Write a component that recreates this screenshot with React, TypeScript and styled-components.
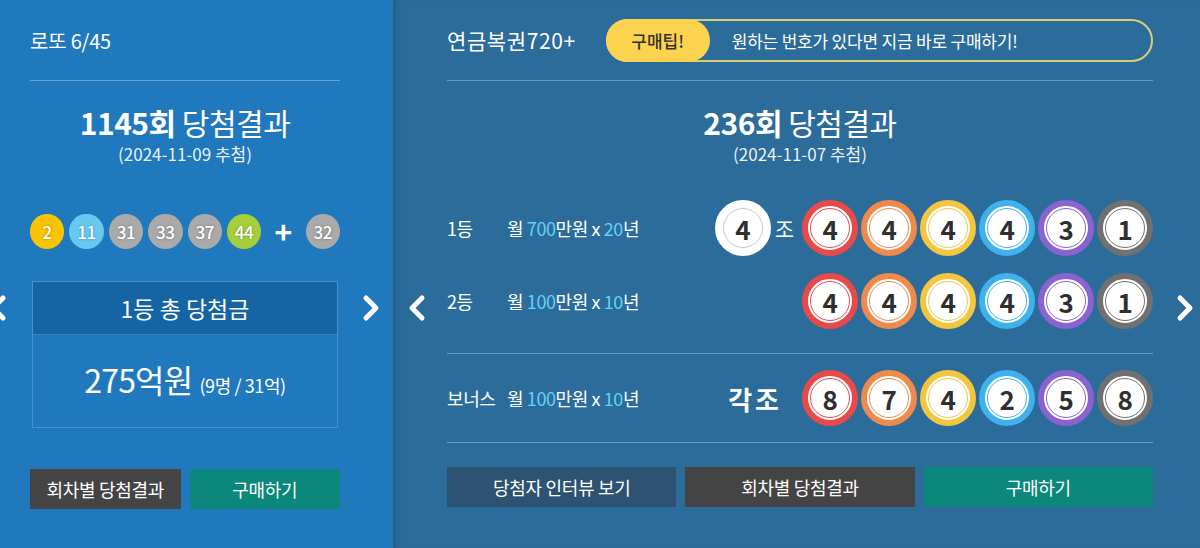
import React from 'react'
import styled, { createGlobalStyle } from 'styled-components'

const GlobalStyle = createGlobalStyle`
  html, body {
    margin: 0;
    padding: 0;
    background: #2c6c9b;
  }
  body {
    font-family: "Noto Sans CJK KR", "Noto Sans", sans-serif;
    color: #fff;
  }
  * { box-sizing: border-box; }
`

const lottoColor = (n: number) => {
  if (n <= 10) return '#fbc400'
  if (n <= 20) return '#69c8f2'
  if (n <= 30) return '#ff7272'
  if (n <= 40) return '#aaaaaa'
  return '#a6cf3c'
}

const ringColors = ['#e84a4a', '#f08a4b', '#f4c640', '#3db2ec', '#8a62d2', '#707070']

const Page = styled.div`
  display: flex;
  width: 1200px;
  height: 548px;
  overflow: hidden;
`

const Panel = styled.section<{ $tone: 'lotto' | 'pension' }>`
  position: relative;
  display: flex;
  flex-direction: column;
  height: 100%;
  background: ${(p) => (p.$tone === 'lotto' ? '#2179bd' : '#2c6c9b')};
  ${(p) =>
    p.$tone === 'lotto'
      ? 'width: 393px; padding: 0 53px 0 30px;'
      : 'flex: 1; padding: 0 47px 0 54px; box-shadow: inset 6px 0 8px -6px rgba(0,0,0,0.25);'}
`

const Header = styled.header`
  display: flex;
  align-items: center;
  height: 81px;
  border-bottom: 1px solid rgba(255, 255, 255, 0.32);
`

const Brand = styled.h2<{ $wide?: boolean }>`
  margin: 0;
  font-size: ${(p) => (p.$wide ? '21px' : '20px')};
  font-weight: 400;
  letter-spacing: ${(p) => (p.$wide ? '0.6px' : '-0.2px')};
  white-space: nowrap;
`

const TipPill = styled.div`
  display: flex;
  align-items: center;
  flex: 1;
  height: 43px;
  margin-left: 30px;
  border: 2px solid #d6cf78;
  border-radius: 22px;
`

const TipBadge = styled.span`
  display: flex;
  align-items: center;
  justify-content: center;
  width: 104px;
  height: 43px;
  margin: -2px 0 -2px -2px;
  background: #fdd24e;
  border-radius: 22px;
  color: #333;
  font-size: 17px;
  font-weight: 500;
`

const TipText = styled.span`
  padding-left: 22px;
  font-size: 17px;
  letter-spacing: -0.2px;
`

const Title = styled.h1`
  margin: 22px 0 0;
  text-align: center;
  font-size: 30px;
  line-height: 38px;
  font-weight: 400;
  letter-spacing: -0.5px;
  b { font-weight: 700; }
`

const DrawDate = styled.p`
  margin: 1px 0 0;
  text-align: center;
  font-size: 17px;
  line-height: 24px;
  color: rgba(255, 255, 255, 0.92);
`

const LottoRow = styled.div`
  display: flex;
  align-items: center;
  gap: 5px;
  margin-top: 48px;
`

const LottoBall = styled.span<{ $color: string }>`
  display: flex;
  align-items: center;
  justify-content: center;
  width: 35px;
  height: 35px;
  border-radius: 50%;
  background: ${(p) => p.$color};
  font-size: 17px;
  font-weight: 500;
  letter-spacing: -0.5px;
  text-shadow: 0 0 3px rgba(0, 0, 0, 0.35);
`

const Plus = styled.span`
  width: 35px;
  text-align: center;
  font-size: 30px;
  font-weight: 700;
  line-height: 35px;
`

const PrizeBox = styled.div`
  margin: 32px 2px 0;
  border: 1px solid rgba(255, 255, 255, 0.18);
`

const PrizeHead = styled.div`
  display: flex;
  align-items: center;
  justify-content: center;
  height: 53px;
  background: #1565a4;
  border-bottom: 1px solid rgba(255, 255, 255, 0.18);
  font-size: 23px;
`

const PrizeBody = styled.div`
  display: flex;
  align-items: baseline;
  justify-content: center;
  height: 92px;
  padding-top: 21px;
  font-size: 32px;
  letter-spacing: -0.8px;
  small {
    margin-left: 7px;
    font-size: 18px;
    letter-spacing: -0.4px;
  }
`

const ButtonBar = styled.div<{ $top: number }>`
  display: flex;
  gap: 9px;
  margin-top: ${(p) => p.$top}px;
`

const ActionButton = styled.button<{ $kind: 'dark' | 'teal' | 'navy' }>`
  flex: 1;
  height: 40px;
  border: 0;
  background: ${(p) => (p.$kind === 'dark' ? '#444444' : p.$kind === 'teal' ? '#0b877b' : '#2d5272')};
  color: #fff;
  font-family: inherit;
  font-size: 18px;
  letter-spacing: -0.3px;
  cursor: pointer;
`

const PrizeRow = styled.div<{ $top: number }>`
  display: flex;
  align-items: center;
  height: 56px;
  margin-top: ${(p) => p.$top}px;
  font-size: 18px;
  letter-spacing: -0.4px;
`

const Rank = styled.span`
  width: 60px;
  white-space: nowrap;
`

const Amount = styled.span`
  flex: 1;
  white-space: nowrap;
  em {
    font-style: normal;
    color: #63d2f7;
  }
`

const GroupBox = styled.div<{ $gap: number }>`
  display: flex;
  align-items: center;
  gap: 4px;
  margin-right: ${(p) => p.$gap}px;
`

const GroupWord = styled.span<{ $big?: boolean }>`
  font-size: ${(p) => (p.$big ? '26px' : '21px')};
  font-weight: ${(p) => (p.$big ? 700 : 400)};
  letter-spacing: ${(p) => (p.$big ? '3px' : '0')};
`

const Balls = styled.div`
  display: flex;
  gap: 3px;
`

const RingBall = styled.span<{ $color: string; $inner?: string }>`
  position: relative;
  display: flex;
  align-items: center;
  justify-content: center;
  width: 56px;
  height: 56px;
  border-radius: 50%;
  background: #fff;
  border: 6px solid ${(p) => p.$color};
  color: #2f2f2f;
  font-size: 26px;
  font-weight: 700;
  &::before {
    content: '';
    position: absolute;
    inset: 2px;
    border-radius: 50%;
    border: 1px solid ${(p) => p.$inner ?? p.$color};
  }
`

const Divider = styled.hr<{ $top: number }>`
  margin: ${(p) => p.$top}px 0 0;
  border: 0;
  border-top: 1px solid rgba(255, 255, 255, 0.32);
`

const NavArrow = styled.svg<{ $x: number }>`
  position: absolute;
  top: 294px;
  left: ${(p) => p.$x}px;
  width: 20px;
  height: 28px;
`

const Chevron = ({ x, dir }: { x: number; dir: 'left' | 'right' }) => (
  <NavArrow $x={x} viewBox="0 0 20 28">
    <polyline
      points={dir === 'right' ? '5,4 15,14 5,24' : '15,4 5,14 15,24'}
      fill="none"
      stroke="#fff"
      strokeWidth="5"
      strokeLinecap="round"
      strokeLinejoin="round"
    />
  </NavArrow>
)

const Ring = ({ digits }: { digits: number[] }) => (
  <Balls>
    {digits.map((d, i) => (
      <RingBall key={i} $color={ringColors[i]}>
        {d}
      </RingBall>
    ))}
  </Balls>
)

export default function App() {
  const winning = [2, 11, 31, 33, 37, 44]
  const bonus = 32

  return (
    <Page>
      <GlobalStyle />
      <Panel $tone="lotto">
        <Header>
          <Brand>로또 6/45</Brand>
        </Header>
        <Title>
          <b>1145회</b> 당첨결과
        </Title>
        <DrawDate>(2024-11-09 추첨)</DrawDate>
        <LottoRow>
          {winning.map((n) => (
            <LottoBall key={n} $color={lottoColor(n)}>
              {n}
            </LottoBall>
          ))}
          <Plus>+</Plus>
          <LottoBall $color={lottoColor(bonus)}>{bonus}</LottoBall>
        </LottoRow>
        <PrizeBox>
          <PrizeHead>1등 총 당첨금</PrizeHead>
          <PrizeBody>
            275억원<small>(9명 / 31억)</small>
          </PrizeBody>
        </PrizeBox>
        <ButtonBar $top={41}>
          <ActionButton $kind="dark">회차별 당첨결과</ActionButton>
          <ActionButton $kind="teal">구매하기</ActionButton>
        </ButtonBar>
        <Chevron x={-12} dir="left" />
        <Chevron x={361} dir="right" />
      </Panel>

      <Panel $tone="pension">
        <Header>
          <Brand $wide>연금복권720+</Brand>
          <TipPill>
            <TipBadge>구매팁!</TipBadge>
            <TipText>원하는 번호가 있다면 지금 바로 구매하기!</TipText>
          </TipPill>
        </Header>
        <Title>
          <b>236회</b> 당첨결과
        </Title>
        <DrawDate>(2024-11-07 추첨)</DrawDate>

        <PrizeRow $top={34}>
          <Rank>1등</Rank>
          <Amount>
            월 <em>700</em>만원 x <em>20</em>년
          </Amount>
          <GroupBox $gap={8}>
            <RingBall $color="#ffffff" $inner="#c8c8c8">4</RingBall>
            <GroupWord>조</GroupWord>
          </GroupBox>
          <Ring digits={[4, 4, 4, 4, 3, 1]} />
        </PrizeRow>
        <PrizeRow $top={17}>
          <Rank>2등</Rank>
          <Amount>
            월 <em>100</em>만원 x <em>10</em>년
          </Amount>
          <Ring digits={[4, 4, 4, 4, 3, 1]} />
        </PrizeRow>
        <Divider $top={24} />
        <PrizeRow $top={16}>
          <Rank>보너스</Rank>
          <Amount>
            월 <em>100</em>만원 x <em>10</em>년
          </Amount>
          <GroupBox $gap={20}>
            <GroupWord $big>각조</GroupWord>
          </GroupBox>
          <Ring digits={[8, 7, 4, 2, 5, 8]} />
        </PrizeRow>
        <Divider $top={16} />
        <ButtonBar $top={24}>
          <ActionButton $kind="navy">당첨자 인터뷰 보기</ActionButton>
          <ActionButton $kind="dark">회차별 당첨결과</ActionButton>
          <ActionButton $kind="teal">구매하기</ActionButton>
        </ButtonBar>
        <Chevron x={14} dir="left" />
        <Chevron x={782} dir="right" />
      </Panel>
    </Page>
  )
}
